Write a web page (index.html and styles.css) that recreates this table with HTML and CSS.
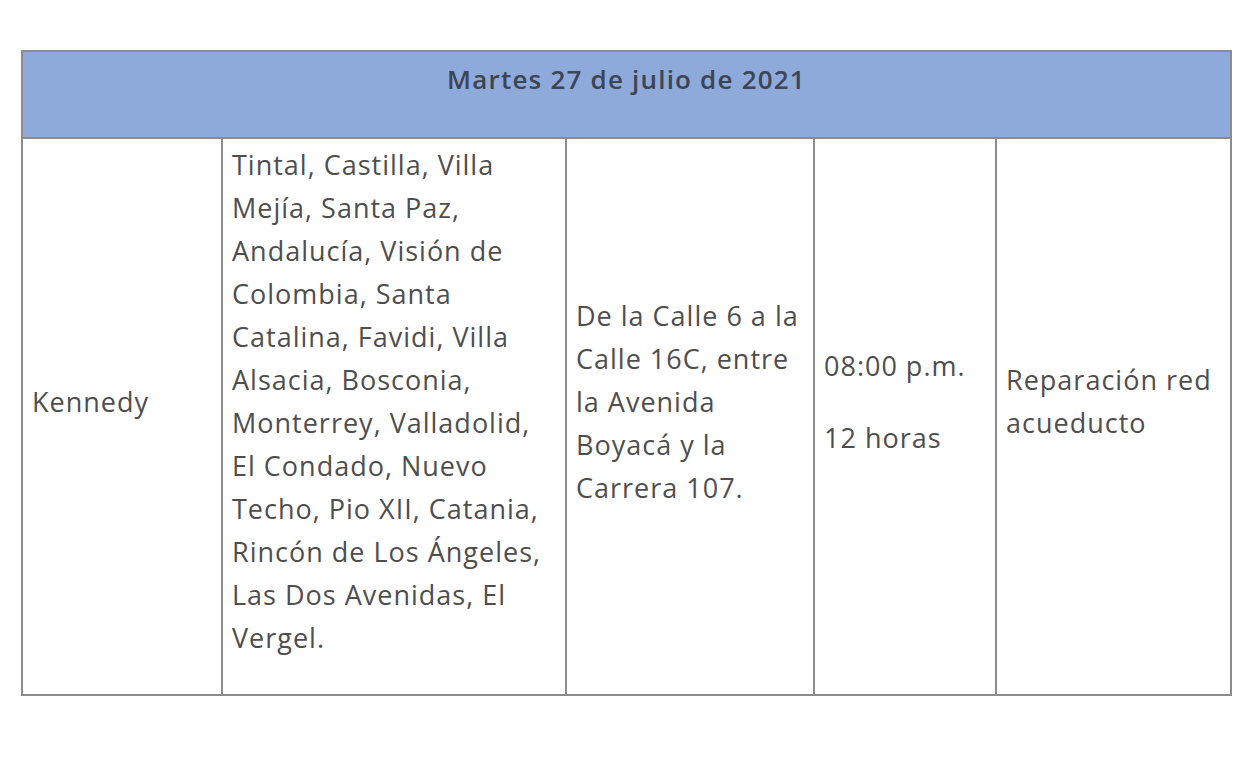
FILE: index.html
```html
<!DOCTYPE html>
<html lang="es">
<head>
<meta charset="utf-8">
<title>Cortes de agua</title>
<link rel="stylesheet" href="styles.css">
</head>
<body>
<div class="page">
  <table class="schedule">
    <colgroup>
      <col class="c1"><col class="c2"><col class="c3"><col class="c4"><col class="c5">
    </colgroup>
    <thead>
      <tr><th colspan="5"><p>Martes 27 de julio de 2021</p></th></tr>
    </thead>
    <tbody>
      <tr>
        <td><p>Kennedy</p></td>
        <td><p>Tintal, Castilla, Villa Mejía, Santa Paz, Andalucía, Visión de Colombia, Santa Catalina, Favidi, Villa Alsacia, Bosconia, Monterrey, Valladolid, El Condado, Nuevo Techo, Pio XII, Catania, Rincón de Los Ángeles, Las Dos Avenidas, El Vergel.</p></td>
        <td><p>De la Calle 6 a la Calle 16C, entre la Avenida Boyacá y la Carrera 107.</p></td>
        <td><p>08:00 p.m.</p><p>12 horas</p></td>
        <td><p>Reparación red acueducto</p></td>
      </tr>
    </tbody>
  </table>
</div>
</body>
</html>
```

FILE: styles.css
```css
html, body {
  margin: 0;
  background: #ffffff;
}
.page {
  padding: 50px 0 0 21px;
}
.schedule {
  border-collapse: collapse;
  table-layout: fixed;
  width: 1209px;
  font-family: "Open Sans", "Liberation Sans", sans-serif;
  font-size: 27px;
  letter-spacing: 1px;
  color: #4e4e4e;
}
.c1 { width: 200px; }
.c2 { width: 344px; }
.c3 { width: 248px; }
.c4 { width: 182px; }
.c5 { width: 235px; }
.schedule th,
.schedule td {
  border: 2px solid #8c8c8c;
  padding: 4px 4px 6px 9px;
  text-align: left;
  vertical-align: middle;
}
.schedule th {
  background: #8eaadb;
  text-align: center;
  font-weight: 600;
  font-size: 26px;
  letter-spacing: 1.2px;
  color: #3d4454;
  padding: 6px 9px 7px;
}
.schedule p {
  margin: 0 0 29px;
  line-height: 43px;
}
```
